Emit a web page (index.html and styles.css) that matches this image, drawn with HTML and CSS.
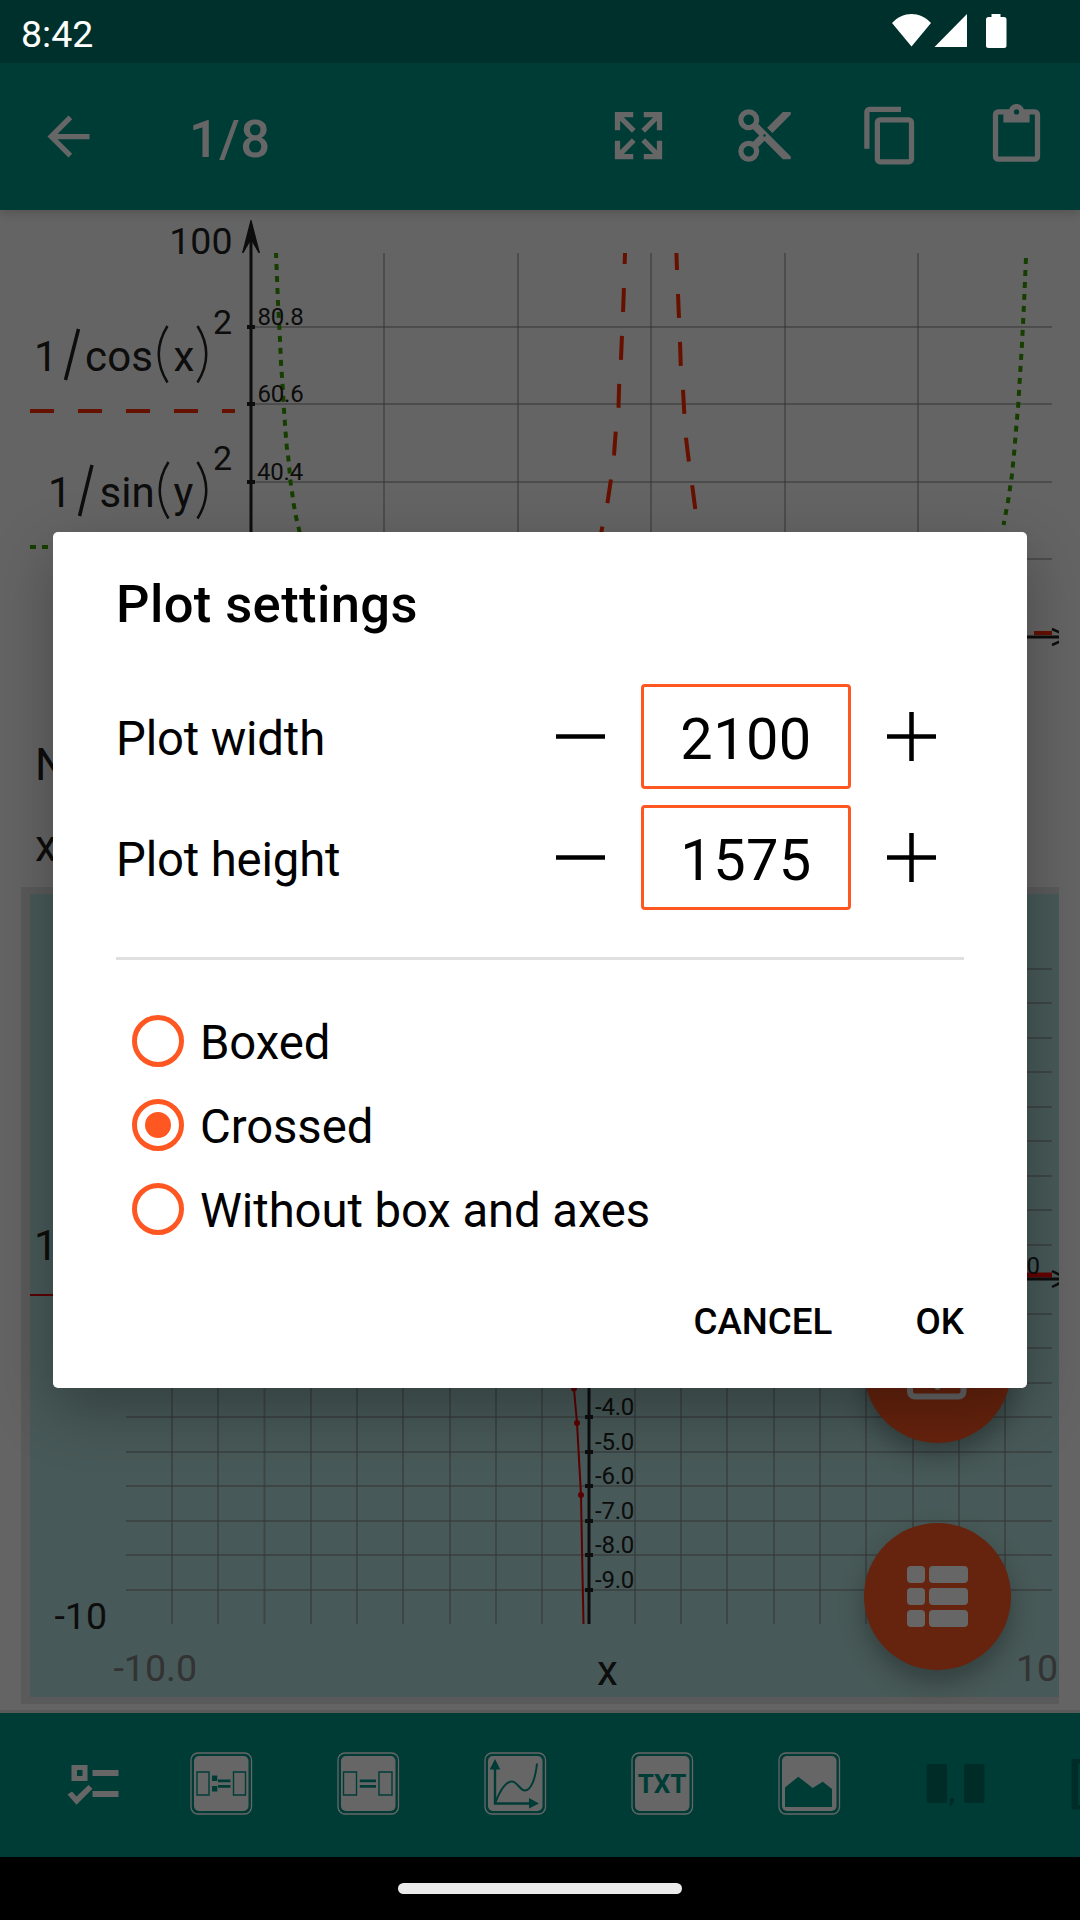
FILE: index.html
```html
<!DOCTYPE html>
<html lang="en">
<head>
<meta charset="utf-8">
<title>Plot settings</title>
<link rel="stylesheet" href="styles.css">
</head>
<body>
<div class="screen">
  <header class="status-bar">
    <span class="clock">8:42</span>
    <svg class="status-icons" width="116" height="36" viewBox="0 0 116 36">
      <path d="M0 10C11 -2 28 -2 39 10L19.500 33.500Z"/>
      <path d="M42.500 34L75 1V34Z"/>
      <path d="M99.500 1H108.500V4H112Q114.500 4 114.500 6.500V32.500Q114.500 35 112 35H96.500Q94 35 94 32.500V6.500Q94 4 96.500 4H99.500Z"/>
    </svg>
  </header>

  <nav class="toolbar">
    <svg class="icon" viewBox="0 0 24 24"><path d="M20 11H7.830l5.590-5.590L12 4l-8 8 8 8 1.410-1.410L7.830 13H20v-2z"/></svg>
    <span class="toolbar-title">1/8</span>
    <div class="actions">
      <svg class="icon" viewBox="0 0 24 24"><path d="M9.500,13.090L10.910,14.500L6.410,19H10V21H3V14H5V17.590L9.500,13.090M10.910,9.500L9.500,10.910L5,6.410V10H3V3H10V5H6.410L10.910,9.500M14.500,13.090L19,17.590V14H21V21H14V19H17.590L13.090,14.500L14.500,13.090M13.090,9.500L17.590,5H14V3H21V10H19V6.410L14.500,10.910L13.090,9.500Z"/></svg>
      <svg class="icon" viewBox="0 0 24 24"><path d="M19,3L13,9L15,11L22,4V3M12,12.500A0.500,0.500 0 0,1 11.500,12A0.500,0.500 0 0,1 12,11.500A0.500,0.500 0 0,1 12.500,12A0.500,0.500 0 0,1 12,12.500M6,20A2,2 0 0,1 4,18C4,16.890 4.900,16 6,16A2,2 0 0,1 8,18C8,19.110 7.100,20 6,20M6,8A2,2 0 0,1 4,6C4,4.890 4.900,4 6,4A2,2 0 0,1 8,6C8,7.110 7.100,8 6,8M9.640,7.640C9.870,7.140 10,6.590 10,6A4,4 0 0,0 6,2A4,4 0 0,0 2,6A4,4 0 0,0 6,10C6.590,10 7.140,9.870 7.640,9.640L10,12L7.640,14.360C7.140,14.130 6.590,14 6,14A4,4 0 0,0 2,18A4,4 0 0,0 6,22A4,4 0 0,0 10,18C10,17.410 9.870,16.860 9.640,16.360L12,14L19,21H22V20L9.640,7.640Z"/></svg>
      <svg class="icon" viewBox="0 0 24 24"><path d="M19,21H8V7H19M19,5H8A2,2 0 0,0 6,7V21A2,2 0 0,0 8,23H19A2,2 0 0,0 21,21V7A2,2 0 0,0 19,5M16,1H4A2,2 0 0,0 2,3V17H4V3H16V1Z"/></svg>
      <svg class="icon" viewBox="0 0 24 24"><path d="M19,20H5V4H7V7H17V4H19M12,2A1,1 0 0,1 13,3A1,1 0 0,1 12,4A1,1 0 0,1 11,3A1,1 0 0,1 12,2M19,2H14.820C14.400,0.840 13.300,0 12,0C10.700,0 9.600,0.840 9.180,2H5A2,2 0 0,0 3,4V20A2,2 0 0,0 5,22H19A2,2 0 0,0 21,20V4A2,2 0 0,0 19,2Z"/></svg>
    </div>
  </nav>

  <main class="document">
    <svg class="plot" width="1059" height="510" viewBox="0 210 1059 510">
      <g class="grid">
        <path d="M384 253V637M518 253V637M651 253V637M785 253V637M918 253V637"/>
        <path d="M251 327H1052M251 404H1052M251 482H1052M251 559H1052"/>
      </g>
      <g class="axis">
        <path d="M251 235V637H1059"/>
        <path class="tick" d="M247 327H255M247 404H255M247 482H255M247 559H255"/>
        <path class="thin" d="M1052 629L1060 632.500M1052 645L1060 641.500"/>
      </g>
      <path class="ink" d="M250.500 220H251.500L260 253H258.500L251 240L243.500 253H242Z"/>
      <g class="red-dash">
        <path d="M30 411H235"/>
        <path stroke-dashoffset="13" d="M625 253L623.500 300L622 335L621 359L619.200 383.500L618.500 407L615.800 431L614 455L611 479L607.500 502.500L602.300 527L601 534"/>
        <path stroke-dashoffset="7" d="M676.400 253L677 270L678 294L679 318L680 342L680.800 366L683 390L684.300 413L686 438L688.800 461L692.200 485.500L695.300 509"/>
        <path d="M1034 633H1052"/>
      </g>
      <g class="green-dash">
        <path d="M30 547H235"/>
        <path stroke-dashoffset="1" d="M276 253L278 303L280 340L281 363L282.700 387L284 410L285.700 434L286.800 447L288.300 458L290.700 483L292.300 494L294 506L296.300 518L301 538"/>
        <path d="M1026 258L1023.800 308L1022 344L1019.700 380L1018.300 404L1016.200 428L1014.200 452L1011.800 476L1008.300 500L1003.500 525"/>
      </g>
      <text class="limit" x="232.500" y="254" text-anchor="end">100</text>
      <g class="scale">
        <text x="257.500" y="325">80.8</text>
        <text x="257.500" y="402">60.6</text>
        <text x="257" y="480">40.4</text>
      </g>
      <g class="formula">
        <text x="34" y="371">1</text>
        <path class="slash" d="M78.500 329L65.500 380"/>
        <text x="85" y="371" textLength="68">cos</text>
        <path class="paren" d="M167.500 326Q150 354 167.500 382.500M197.500 326Q215 354 197.500 382.500"/>
        <text x="173.500" y="371">x</text>
        <text class="power" x="213" y="334">2</text>
        <text x="48" y="507">1</text>
        <path class="slash" d="M92 465L79.500 516"/>
        <text x="99.500" y="507">sin</text>
        <path class="paren" d="M168.500 462Q151 490 168.500 518.500M197.500 462Q215 490 197.500 518.500"/>
        <text x="173.500" y="507">y</text>
        <text class="power" x="213" y="470">2</text>
      </g>
    </svg>
    <p class="note">N</p>
    <p class="note">x</p>
    <section class="selected-plot">
      <svg class="plot" width="1029" height="803" viewBox="30 894 1029 803">
        <g class="grid">
          <path d="M172 934V1624M218 934V1624M264.500 934V1624M311 934V1624M357 934V1624M403 934V1624M450 934V1624M496 934V1624M542 934V1624M635 934V1624M681 934V1624M727 934V1624M774 934V1624M820 934V1624M866 934V1624M913 934V1624M959 934V1624M1005 934V1624"/>
          <path d="M126 969H1052M126 1003H1052M126 1038H1052M126 1072H1052M126 1107H1052M126 1141H1052M126 1176H1052M126 1210H1052M126 1245H1052M126 1314H1052M126 1348H1052M126 1383H1052M126 1417H1052M126 1452H1052M126 1486H1052M126 1521H1052M126 1555H1052M126 1590H1052"/>
        </g>
        <path class="red-band" d="M1020 1275H1052"/>
        <g class="axis">
          <path d="M589 920V1624M126 1279H1059"/>
          <path class="tick" d="M585 1417H593M585 1452H593M585 1486H593M585 1521H593M585 1555H593M585 1590H593"/>
          <path class="thin" d="M1052 1271L1060 1275M1052 1287L1060 1283"/>
        </g>
        <g class="curve">
          <path d="M30 1295H235M573 1380L574 1389L577 1423L581 1495L582.200 1560L583.500 1624"/>
          <circle cx="574" cy="1388.500" r="2"/><circle cx="577" cy="1423" r="2"/><circle cx="581" cy="1495" r="2"/>
        </g>
        <g class="scale">
          <text x="595" y="1415">-4.0</text>
          <text x="595" y="1450">-5.0</text>
          <text x="595" y="1484">-6.0</text>
          <text x="595" y="1519">-7.0</text>
          <text x="595" y="1553">-8.0</text>
          <text x="595" y="1588">-9.0</text>
          <text x="1026.500" y="1273.500">0</text>
        </g>
        <g class="formula">
          <text x="34" y="1260">1</text>
          <text x="597" y="1685">x</text>
        </g>
        <text class="limit" x="107" y="1629" text-anchor="end">-10</text>
        <text class="limit faint" x="113.500" y="1681">-10.0</text>
        <text class="limit faint" x="1016" y="1681">10</text>
      </svg>
    </section>

    <div class="fabs">
      <div class="fab">
        <svg width="63" height="63" viewBox="0 0 63 63"><rect x="4" y="4" width="53.500" height="54.500" rx="5"/><circle cx="31.500" cy="49" r="3"/></svg>
      </div>
      <div class="fab list">
        <svg width="61" height="61" viewBox="0 0 61 61"><rect width="18" height="17" rx="4"/><rect x="22" width="39" height="17" rx="4"/><rect y="22" width="18" height="17" rx="4"/><rect x="22" y="22" width="39" height="17" rx="4"/><rect y="44" width="18" height="17" rx="4"/><rect x="22" y="44" width="39" height="17" rx="4"/></svg>
      </div>
    </div>
  </main>

  <footer class="insert-bar">
    <svg class="tool" viewBox="0 0 63 63">
      <path fill-rule="evenodd" d="M28.500 13H44.500V29H28.500ZM34 18V24H39.500V18ZM49.500 18H75.500V24H49.500ZM49.500 39H75.500V45H49.500ZM24.500 42.500L29 39.500L33.500 44.500L45.500 33L49.500 36.700L33.500 52.700Z"/>
    </svg>
    <svg class="tool" viewBox="0 0 63 63">
      <rect class="ring" x="1" y="1" width="60.500" height="61" rx="7"/><rect x="4" y="4" width="54.500" height="55" rx="5"/>
      <path class="cut-line" d="M7 20H19V43H7ZM43.500 20H55.500V43H43.500Z"/>
      <path class="cut" d="M22 23.500H27.300V29H22ZM22 34H27.300V39.500H22ZM28 27.500H40.500V30.300H28ZM28 33H40.500V35.800H28Z"/>
    </svg>
    <svg class="tool" viewBox="0 0 63 63">
      <rect class="ring" x="1" y="1" width="60.500" height="61" rx="7"/><rect x="4" y="4" width="54.500" height="55" rx="5"/>
      <path class="cut-line" d="M6.500 20H19.500V43H6.500ZM42 20H55V43H42Z"/>
      <path class="cut" d="M22.800 27.500H39V30.300H22.800ZM22.800 33H39V35.800H22.800Z"/>
    </svg>
    <svg class="tool" viewBox="0 0 63 63">
      <rect class="ring" x="1" y="1" width="60.500" height="61" rx="7"/><rect x="4" y="4" width="54.500" height="55" rx="5"/>
      <path class="cut" d="M11 7L16.300 17.500H12.200V50.300H45V46L55 51.500L45 56.500V52.700H9.800V17.500H5.700Z"/>
      <path class="cut-line curve-line" d="M11.500 50C18 34 23 29.500 28 29.500S36 38.500 41 38.500S51 30 53 11.500"/>
    </svg>
    <svg class="tool" viewBox="0 0 63 63">
      <rect class="ring" x="1" y="1" width="60.500" height="61" rx="7"/><rect x="4" y="4" width="54.500" height="55" rx="5"/>
      <text class="tool-label" x="31" y="41" text-anchor="middle">TXT</text>
    </svg>
    <svg class="tool" viewBox="0 0 63 63">
      <rect class="ring" x="1" y="1" width="60.500" height="61" rx="7"/><rect x="4" y="4" width="54.500" height="55" rx="5"/>
      <path class="cut" d="M7 35.500L20.300 24.700L34.700 36L44.700 29.700L54 37V55H7Z"/>
    </svg>
    <svg class="tool disabled" viewBox="0 0 63 63">
      <rect x="1.500" y="12" width="20.500" height="39" rx="2"/><rect x="39" y="12" width="20.500" height="39" rx="2"/><path d="M25 46H29V49L26.500 54H24.500Z"/>
    </svg>
    <svg class="tool disabled" viewBox="0 0 63 63"><path d="M1.500 7H12V11.500H6V53H12V57.500H1.500Q-.5 57.500 -.5 55.500V9Q-.5 7 1.500 7Z"/></svg>
  </footer>
  <div class="gesture-bar"><span class="handle"></span></div>

  <div class="scrim">
    <section class="dialog">
      <h1 class="dialog-title">Plot settings</h1>
      <div class="sizes">
        <div class="size-row">
          <span class="size-label">Plot width</span>
          <svg class="step" viewBox="0 0 49 49"><path d="M0 24.500H49"/></svg>
          <span class="size-value">2100</span>
          <svg class="step" viewBox="0 0 49 49"><path d="M0 24.500H49M24.500 0V49"/></svg>
        </div>
        <div class="size-row">
          <span class="size-label">Plot height</span>
          <svg class="step" viewBox="0 0 49 49"><path d="M0 24.500H49"/></svg>
          <span class="size-value">1575</span>
          <svg class="step" viewBox="0 0 49 49"><path d="M0 24.500H49M24.500 0V49"/></svg>
        </div>
      </div>
      <div class="options">
        <div class="option"><span class="radio"></span><span class="option-label">Boxed</span></div>
        <div class="option"><span class="radio checked"></span><span class="option-label">Crossed</span></div>
        <div class="option"><span class="radio"></span><span class="option-label">Without box and axes</span></div>
      </div>
      <div class="buttons"><span>CANCEL</span><span>OK</span></div>
    </section>
  </div>
</div>
</body>
</html>
```
FILE: styles.css
```css
* { box-sizing: border-box; }

body {
  margin: 0;
  font-family: Roboto, sans-serif;
  color: #000;
}

svg { display: block; flex: none; }

.screen {
  position: relative;
  display: flex;
  flex-direction: column;
  width: 1080px;
  height: 1920px;
  overflow: hidden;
  background: #fafafa;
}

/* Status bar sits above the scrim, so its colour is already dimmed. */
.status-bar {
  position: relative;
  z-index: 2;
  flex: none;
  display: flex;
  justify-content: space-between;
  height: 63px;
  padding: 13px 72px 0 21px;
  background: #00302b;
  color: #fff;
}
.clock { font-size: 37.5px; line-height: 42px; }
.status-icons { fill: #fff; }

.toolbar {
  position: relative;
  z-index: 1;
  flex: none;
  display: flex;
  align-items: center;
  height: 147px;
  padding: 0 32px 0 37px;
  background: #009688;
  color: #fff;
  box-shadow: 0 3px 10px rgba(0, 0, 0, .18);
}
.icon { width: 63px; height: 63px; fill: #fff; }
.toolbar-title {
  margin-left: 89px;
  padding-top: 4px;
  font-size: 52.5px;
  font-weight: 500;
  letter-spacing: .5px;
}
.actions { display: flex; gap: 63px; margin-left: auto; padding-bottom: 2px; }

.document {
  position: relative;
  flex: none;
  height: 1503px;
  border-bottom: 3px solid #e1e1e1;
}
.plot { overflow: hidden; }
.note {
  height: 81px;
  margin: 0;
  padding-left: 35px;
  font-size: 44px;
  line-height: 91px;
  color: #212121;
}
.selected-plot {
  width: 1038px;
  height: 817px;
  margin: 5px 0 0 21px;
  padding: 7px 0 7px 9px;
  background: #e1e1e1;
}
.selected-plot .plot { background: #b2dfdb; }

.grid { fill: none; stroke: rgba(128, 128, 128, .5); stroke-width: 2; }
.axis { fill: none; stroke: #212121; stroke-width: 3; }
.tick { stroke-width: 4; }
.thin { stroke-width: 2.5; }
.ink { fill: #212121; }
.red-dash { fill: none; stroke: #ff2800; stroke-width: 4; stroke-dasharray: 24 24; }
.green-dash { fill: none; stroke: #389c00; stroke-width: 4; stroke-dasharray: 6 6; }
.red-band { stroke: #f00; stroke-width: 5; }
.curve { fill: #e60000; stroke: #e60000; stroke-width: 2; }
.curve path { fill: none; }
.plot text { fill: #212121; }
.scale { font-size: 24px; letter-spacing: -.2px; }
.limit { font-size: 37.5px; }
.plot .faint { fill: #808080; }
.formula { font-size: 42px; }
.power { font-size: 34px; }
.slash { stroke: #212121; stroke-width: 3.5; }
.paren { fill: none; stroke: #212121; stroke-width: 2.5; }

.fabs {
  position: absolute;
  top: 1086px;
  left: 864px;
  display: grid;
  gap: 80px;
}
.fab {
  display: grid;
  place-items: center;
  width: 147px;
  height: 147px;
  border-radius: 50%;
  background: #ff5722;
  box-shadow: 0 12px 26px rgba(0, 0, 0, .3);
}
.fab rect { fill: none; stroke: #fff; stroke-width: 6; }
.fab circle { fill: #fff; }
.list rect { fill: #fff; stroke: none; }

.insert-bar {
  flex: none;
  display: flex;
  align-items: center;
  gap: 84px;
  height: 144px;
  padding: 0 0 4px 42.5px;
  background: #009688;
}
.tool { width: 63px; height: 63px; fill: #fff; overflow: visible; }
.ring { fill: none; stroke: #fff; stroke-width: 1.3; }
.cut { fill: #009688; }
.cut-line { fill: none; stroke: #009688; stroke-width: 1.4; }
.curve-line { stroke-width: 2; }
.tool-label { font-size: 26px; font-weight: 700; fill: #009688; }
.disabled { fill: #006e64; }

.gesture-bar {
  flex: none;
  display: flex;
  justify-content: center;
  height: 63px;
  padding-top: 26px;
  background: #000;
  position: relative;
  z-index: 2;
}
.handle { width: 284px; height: 11px; border-radius: 6px; background: #ebebeb; }

.scrim {
  position: absolute;
  inset: 0;
  z-index: 1;
  display: grid;
  place-items: center;
  background: rgba(0, 0, 0, .6);
}

.dialog {
  display: flex;
  flex-direction: column;
  width: 974px;
  height: 856px;
  padding: 41px 63px 0;
  border-radius: 5px;
  background: #fff;
  box-shadow: 0 22px 60px rgba(0, 0, 0, .28);
}
.dialog-title {
  margin: 0;
  font-size: 52.5px;
  font-weight: 500;
  line-height: 62px;
  letter-spacing: .4px;
}
.sizes {
  display: grid;
  gap: 16px;
  margin-top: 49px;
  padding-bottom: 47px;
  border-bottom: 3px solid #e0e0e0;
}
.size-row { display: flex; align-items: center; height: 105px; }
.size-label { width: 440px; padding-top: 4px; font-size: 47.25px; letter-spacing: -.15px; }
.step { width: 49px; height: 49px; fill: none; stroke: #000; stroke-width: 4.500; }
.size-value {
  width: 210px;
  height: 105px;
  margin: 0 36px;
  border: 3px solid #ff5722;
  border-radius: 4px;
  font-size: 57.75px;
  line-height: 105px;
  letter-spacing: .4px;
  text-align: center;
}
.options { display: grid; margin-top: 39px; padding-left: 16px; }
.option {
  display: flex;
  align-items: center;
  gap: 16px;
  height: 84px;
  font-size: 47.25px;
  letter-spacing: -.07px;
}
.option-label { padding-top: 4px; }
.radio {
  display: grid;
  place-items: center;
  width: 52px;
  height: 52px;
  border: 5px solid #ff5722;
  border-radius: 50%;
}
.checked::after {
  content: "";
  width: 26px;
  height: 26px;
  border-radius: 50%;
  background: #ff5722;
}
.buttons {
  display: flex;
  justify-content: flex-end;
  gap: 83px;
  margin-top: 50px;
  font-size: 36.75px;
  font-weight: 500;
  line-height: 42px;
}
```
